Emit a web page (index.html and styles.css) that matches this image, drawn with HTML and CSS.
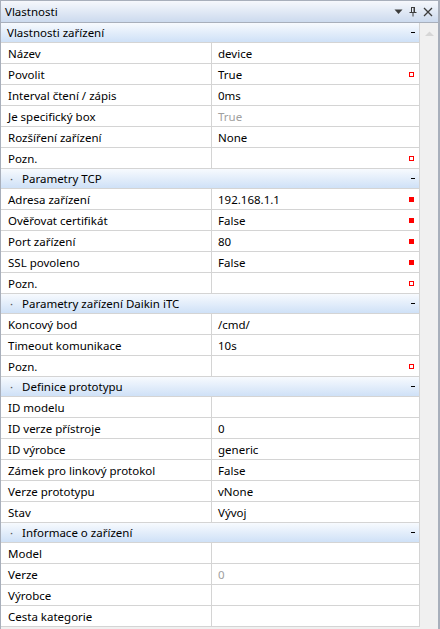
FILE: index.html
```html
<!DOCTYPE html>
<html lang="cs">
<head>
<meta charset="utf-8">
<title>Vlastnosti</title>
<link rel="stylesheet" href="styles.css">
</head>
<body>
<div class="panel">
  <div class="titlebar">
    <span class="title">Vlastnosti</span>
    <div class="tools">
      <svg width="9" height="6" viewBox="0 0 9 6"><path d="M0.5 0.5h8L4.5 5z" fill="#3c3c3c"/></svg>
      <svg width="8" height="11" viewBox="0 0 8 11"><path d="M2 1.5h4M2.5 1.5v5M5.5 1.5v5M5 1.5v5M0.5 6.5h7M4 6.5v4" stroke="#3c3c3c" stroke-width="1" fill="none"/></svg>
      <svg width="10" height="10" viewBox="0 0 10 10"><path d="M1 1l8 8M9 1l-8 8" stroke="#3c3c3c" stroke-width="1.3" fill="none"/></svg>
    </div>
  </div>
  <div class="body">
    <div class="grid">
      <div class="cat first"><span class="cat-name">Vlastnosti zařízení</span><span class="dash"></span></div>
      <div class="row"><div class="k">Název</div><div class="v">device</div></div>
      <div class="row"><div class="k">Povolit</div><div class="v">True<span class="mk hollow"></span></div></div>
      <div class="row"><div class="k">Interval čtení / zápis</div><div class="v">0ms</div></div>
      <div class="row"><div class="k">Je specifický box</div><div class="v dim">True</div></div>
      <div class="row"><div class="k">Rozšíření zařízení</div><div class="v">None</div></div>
      <div class="row"><div class="k">Pozn.</div><div class="v"><span class="mk hollow"></span></div></div>

      <div class="cat"><span class="dot">·</span><span class="cat-name">Parametry TCP</span><span class="dash"></span></div>
      <div class="row"><div class="k">Adresa zařízení</div><div class="v">192.168.1.1<span class="mk solid"></span></div></div>
      <div class="row"><div class="k">Ověřovat certifikát</div><div class="v">False<span class="mk solid"></span></div></div>
      <div class="row"><div class="k">Port zařízení</div><div class="v">80<span class="mk solid"></span></div></div>
      <div class="row"><div class="k">SSL povoleno</div><div class="v">False<span class="mk solid"></span></div></div>
      <div class="row"><div class="k">Pozn.</div><div class="v"><span class="mk hollow"></span></div></div>

      <div class="cat"><span class="dot">·</span><span class="cat-name">Parametry zařízení Daikin iTC</span><span class="dash"></span></div>
      <div class="row"><div class="k">Koncový bod</div><div class="v">/cmd/</div></div>
      <div class="row"><div class="k">Timeout komunikace</div><div class="v">10s</div></div>
      <div class="row"><div class="k">Pozn.</div><div class="v"><span class="mk hollow"></span></div></div>

      <div class="cat"><span class="dot">·</span><span class="cat-name">Definice prototypu</span><span class="dash"></span></div>
      <div class="row"><div class="k">ID modelu</div><div class="v"></div></div>
      <div class="row"><div class="k">ID verze přístroje</div><div class="v">0</div></div>
      <div class="row"><div class="k">ID výrobce</div><div class="v">generic</div></div>
      <div class="row"><div class="k">Zámek pro linkový protokol</div><div class="v">False</div></div>
      <div class="row"><div class="k">Verze prototypu</div><div class="v">vNone</div></div>
      <div class="row"><div class="k">Stav</div><div class="v">Vývoj</div></div>

      <div class="cat"><span class="dot">·</span><span class="cat-name">Informace o zařízení</span><span class="dash"></span></div>
      <div class="row"><div class="k">Model</div><div class="v"></div></div>
      <div class="row"><div class="k">Verze</div><div class="v dim">0</div></div>
      <div class="row"><div class="k">Výrobce</div><div class="v"></div></div>
      <div class="row"><div class="k">Cesta kategorie</div><div class="v"></div></div>
    </div>
    <div class="scrollbar">
      <svg width="9" height="5" viewBox="0 0 9 5"><path d="M0 5L4.5 0.5L9 5z" fill="#d6d6d6"/></svg>
    </div>
  </div>
</div>
</body>
</html>
```

FILE: styles.css
```css
* { box-sizing: border-box; }
html, body { margin: 0; padding: 0; }
body {
  width: 440px;
  height: 629px;
  overflow: hidden;
  background: #f0f0f0;
  font-family: "Segoe UI", "Noto Sans", "Open Sans", sans-serif;
  font-size: 11.5px;
  color: #000;
}
.panel {
  width: 440px;
  height: 629px;
  display: flex;
  flex-direction: column;
  border-left: 1px solid #a8afbb;
  border-right: 2px solid #a8afbb;
  border-top: 1px solid #a8afbb;
}
.titlebar {
  height: 22px;
  flex: none;
  display: flex;
  align-items: center;
  justify-content: space-between;
  padding: 0 5px 0 4px;
  background: linear-gradient(#f6f8fc, #ccdaee);
  border-bottom: 1px solid #a8afbb;
}
.title { line-height: 1; }
.tools {
  display: flex;
  align-items: center;
  gap: 6px;
}
.tools svg { display: block; }
.body {
  flex: 1;
  display: flex;
  min-height: 0;
}
.grid {
  width: 419px;
  flex: none;
  background: #fff;
  border-right: 1px solid #d4d4d4;
  align-self: flex-start;
}
.cat {
  height: 20px;
  display: flex;
  align-items: center;
  padding: 0 4px 0 6px;
  background: linear-gradient(#f7fafe, #cfe1f7);
  border-bottom: 1px solid #d4d4d4;
}
.dot {
  width: 15px;
  padding-left: 3px;
  color: #555;
}
.cat-name { flex: 1; }
.dash {
  width: 4px;
  height: 1px;
  background: #000;
}
.row {
  height: 21px;
  display: flex;
  border-bottom: 1px solid #d4d4d4;
}
.k {
  width: 211px;
  flex: none;
  padding-left: 7px;
  display: flex;
  align-items: center;
  border-right: 1px solid #d4d4d4;
  white-space: nowrap;
}
.v {
  flex: 1;
  display: flex;
  align-items: center;
  padding-left: 6px;
  padding-right: 5px;
}
.v.dim { color: #a0a0a0; }
.mk {
  width: 5px;
  height: 5px;
  margin-left: auto;
}
.mk.hollow { border: 1px solid #ff0000; }
.mk.solid { background: #ff0000; }
.scrollbar {
  flex: 1;
  background: #f0f0f0;
  display: flex;
  justify-content: center;
  padding-top: 8px;
}
.scrollbar svg { display: block; }
```
